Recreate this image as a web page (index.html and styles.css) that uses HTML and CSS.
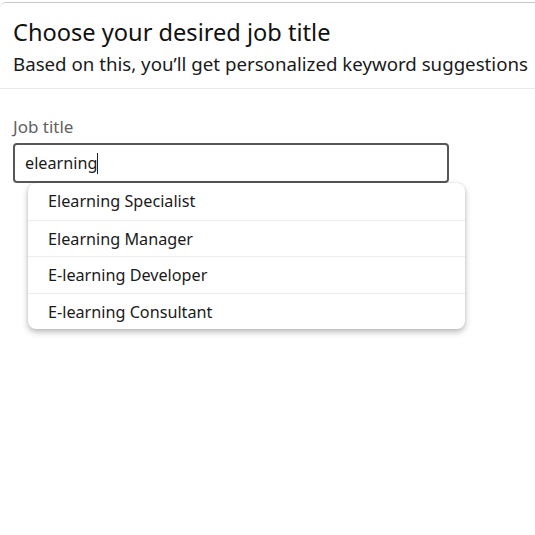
FILE: index.html
```html
<!DOCTYPE html>
<html>
<head>
<meta charset="utf-8">
<link rel="stylesheet" href="styles.css">
</head>
<body>
<div class="modal">
  <header class="head">
    <h1 class="title">Choose your desired job title</h1>
    <p class="subtitle">Based on this, you’ll get personalized keyword suggestions</p>
  </header>
  <section class="body">
    <label class="label">Job title</label>
    <div class="field">
      <div class="input">elearning<span class="caret"></span></div>
      <ul class="menu">
        <li class="item">Elearning Specialist</li>
        <li class="item">Elearning Manager</li>
        <li class="item">E-learning Developer</li>
        <li class="item">E-learning Consultant</li>
      </ul>
    </div>
  </section>
</div>
</body>
</html>
```
FILE: styles.css
```css
* { box-sizing: border-box; }
html, body { margin: 0; padding: 0; background: #fff; }
body {
  font-family: "Noto Sans", "Open Sans", sans-serif;
  color: #1a1a1a;
  width: 535px;
  height: 535px;
  overflow: hidden;
}
.modal {
  margin-top: 2px;
  border-top: 1px solid #c8c8c8;
  border-top-left-radius: 6px;
  position: relative;
}
.head {
  padding: 14px 13px 12px;
  border-bottom: 1px solid #ebebeb;
}
.title {
  margin: 0 0 5px;
  font-size: 23.6px;
  font-weight: 400;
  line-height: 30px;
  color: #111;
  white-space: nowrap;
}
.subtitle {
  margin: 0;
  font-size: 18.7px;
  line-height: 24px;
  color: #1a1a1a;
  white-space: nowrap;
}
.body {
  padding: 27px 13px 0;
}
.label {
  display: block;
  font-size: 17px;
  line-height: 22px;
  color: #616161;
  margin-bottom: 5px;
}
.field {
  position: relative;
  width: 436px;
}
.input {
  height: 40px;
  border: 2px solid #575757;
  border-radius: 4px;
  padding: 0 10px;
  font-size: 16.2px;
  line-height: 36px;
  color: #1a1a1a;
  display: flex;
  align-items: center;
}
.caret {
  display: inline-block;
  width: 1px;
  height: 21px;
  background: #222;
  margin-left: 0;
}
.menu {
  position: absolute;
  left: 15px;
  top: 40px;
  width: 437px;
  margin: 0;
  padding: 0;
  list-style: none;
  background: #fff;
  border-radius: 8px;
  box-shadow: 0 3px 6px rgba(0,0,0,0.28), 0 0 2px rgba(0,0,0,0.12);
}
.item {
  height: 36.5px;
  padding: 0 20px;
  font-size: 16.2px;
  line-height: 36px;
  color: #1a1a1a;
  border-top: 1px solid #ececec;
}
.item:first-child { border-top: none; }
```
